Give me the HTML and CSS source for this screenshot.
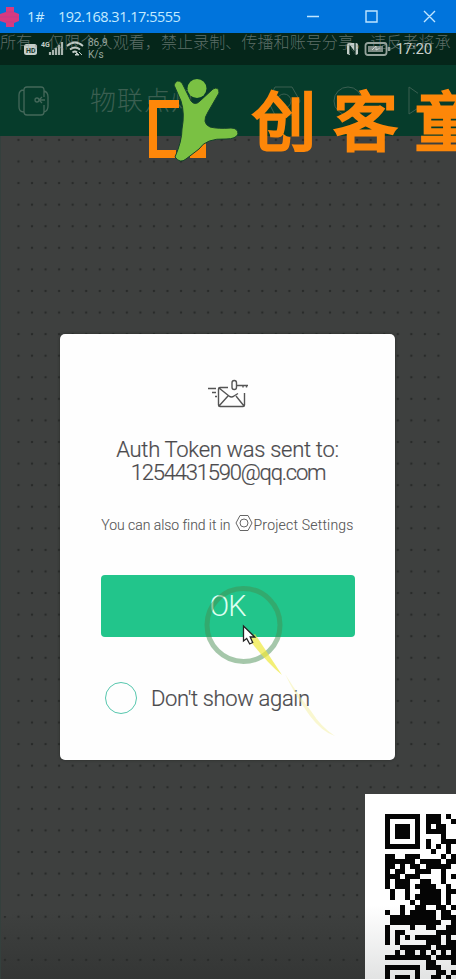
FILE: index.html
```html
<!DOCTYPE html>
<html lang="zh-CN">
<head>
<meta charset="utf-8">
<title>192.168.31.17:5555</title>
<link rel="stylesheet" href="styles.css">
</head>
<body>
<div class="window">
  <header class="titlebar">
    <svg class="app-icon" width="20" height="22" viewBox="0 0 20 22"><path d="M6 1h8v5l5 2v7l-5 2v4H6v-4l-6-2V8l6-2z" fill="#d83a80"/><path d="M0 11h19M6 6h8M6 16h8" stroke="#b13f92" opacity=".5"/></svg>
    <span class="device">1#</span>
    <span class="address">192.168.31.17:5555</span>
    <svg class="controls" width="132" height="17" viewBox="0 0 132 17" fill="none" stroke="#bfe5ff" stroke-width="1.4"><path d="M1 8.500h12M60 3h11v11H60zM118 3l11 11M129 3l-11 11"/></svg>
  </header>

  <div class="statusbar">
    <svg class="status-left" width="62" height="18" viewBox="0 0 62 18">
      <rect x="0" y="4" width="13" height="11" rx="2.5" fill="#c4cec9"/>
      <text x="2" y="12.500" class="hd">HD</text>
      <text x="17" y="7" class="gen">4G</text>
      <path d="M26 15v-3M29 15v-5M32 15V8M35 15V5M38 15V2" stroke="#a9b5af" stroke-width="2.200"/>
      <g fill="none" stroke="#c4cec9" stroke-width="1.800"><path d="M43 6q8-7 16 0M46 9.500q5-4 10 0M48.500 12.500q2.500-2 4.500 0"/></g>
      <path d="M51 15l2-2 2 2zM55 12l3 3" stroke="#c4cec9" fill="#c4cec9"/>
    </svg>
    <div class="speed"><span>86.9</span><span>K/s</span></div>
    <svg class="status-right" width="46" height="14" viewBox="0 0 46 14" fill="none">
      <path d="M1 12V3q0-2 2-2h7q2 0 2 2v9l-2 1-6-8v8z" fill="#c4cec9"/><path d="M4 12V4l5 7V1" stroke="#05261a" stroke-width="1.200"/>
      <rect x="19.500" y="1" width="21" height="12" rx="2.500" stroke="#96a49d" stroke-width="1.800"/><rect x="22" y="4" width="15" height="6" fill="#7d8b84"/><path d="M43 5v4" stroke="#96a49d" stroke-width="2.500"/><path d="M26 8l4-4v4l4-2" stroke="#d0d8d4"/>
    </svg>
    <time class="clock">17:20</time>
    <div class="watermark">所有，仅限个人观看，禁止录制、传播和账号分享，违反者将承</div>
  </div>

  <div class="appbar">
    <svg class="exit-icon" width="32" height="32" viewBox="0 0 32 32" fill="none" stroke="#44685a" stroke-width="1.300"><path d="M26 12V5q0-3-3-3H9Q6 2 6 5v22q0 3 3 3h14q3 0 3-3v-7M6 5Q1 5 1 10v12q0 5 5 5M26 6q4 1 4 6v9q0 5-4 6M27 15h-6M21 15l3-3M21 15l3 3"/><circle cx="19" cy="15" r="2"/></svg>
    <span class="project">物联点灯</span>
    <svg class="bar-actions" width="150" height="34" viewBox="0 0 150 34" fill="none" stroke="#3b5f51"><path d="M7 3h17l8 14-8 14H7L0 17z"/><circle cx="16" cy="17" r="7"/><circle cx="80" cy="17" r="14"/><path d="M141 3v27l20-13z"/></svg>
    <div class="brand">
      <svg width="91" height="84" viewBox="0 0 91 84">
        <path d="M31 25H5v50h23M42 75h12V56" fill="none" stroke="#fd8709" stroke-width="8"/>
        <path d="M26 6Q29-1 34 4l9 18q4 5 9 0l13-12q6-3 6 4L60 33q-7 11 2 15 8 2 21 1 7 0 7 6-2 5-12 5-20-1-27 10L38 80q-6 5-11-2 7-16 7-28Q37 34 33 22z" fill="#7ac143" stroke="#14402c"/>
        <circle cx="49" cy="9.500" r="9.500" fill="#7ac143"/>
      </svg>
      <span class="brand-name">创客童</span>
    </div>
  </div>

  <main class="canvas">
    <section class="dialog">
      <svg class="mail-icon" width="42" height="30" viewBox="0 0 42 30" fill="none" stroke="#555" stroke-width="1.400"><path d="M0 9.500h8M4 13.500h4M7 17.500h2M20 8.500h-8q-1.500 0-1.500 1.500v16q0 1.500 1.500 1.500h23q1.500 0 1.500-1.500V14M11 9l10 8q2.500 2 5 0l4-2.500M11 27l9-10M36 27l-8-10"/><rect x="24" y="1.500" width="4.500" height="9" rx="2.200"/><path d="M29 6.500h11M35 6v2.500M38.500 6v2.500"/></svg>
      <p class="headline"><span class="h-one">Auth Token was sent to:</span><span class="h-two">1254431590@qq.com</span></p>
      <p class="hint"><span class="hint-a">You can also find it in</span><svg width="18" height="18" viewBox="0 0 18 18" fill="none" stroke="#666"><path d="M5 1.500h8L17 9l-4 7.500H5L1 9z"/><circle cx="9" cy="9" r="4"/></svg><span class="hint-b">Project Settings</span></p>
      <button class="ok">OK</button>
      <label class="again"><span class="radio"></span><span class="again-text">Don't show again</span></label>
    </section>
  </main>

  <svg class="pointer" width="136" height="155" viewBox="0 0 136 155">
    <circle cx="43.500" cy="40" r="36.500" fill="none" stroke="#468c50" stroke-opacity=".48" stroke-width="5"/>
    <path d="M48 53l7-4 27 41q-16-13-34-37z" fill="#eee83a" opacity=".7"/>
    <path d="M85 89q14 22 26 37 10 16 24 25-13-4-25-20Q96 112 85 89z" fill="#f3ef9a" opacity=".45"/>
    <path d="M43.500 41v15l3.200-2.500 3 5.500 3-1.500-2.500-5.500h4.500z" fill="#fff" stroke="#222" stroke-width="1.300"/>
  </svg>

  <aside class="qr-card"><svg class="qr" width="76" height="166" viewBox="0 0 15 33" preserveAspectRatio="none" shape-rendering="crispEdges"><path id="modules" fill="#050505"/></svg></aside>
</div>
<script src="qr.js"></script>
</body>
</html>
```
FILE: styles.css
```css
* { box-sizing: border-box; }
body { margin: 0; background: #3e403f; font-family: Roboto, "Noto Sans CJK SC", sans-serif; }
.window { position: relative; width: 456px; height: 979px; overflow: hidden; display: flex; flex-direction: column; }
.titlebar { height: 33px; flex: none; display: flex; align-items: center; background: #0074dc; color: #c4ebff; font: 14.5px "Open Sans", sans-serif; }
.app-icon { flex: none; }
.device { width: 31px; margin-left: 7px; }
.address { letter-spacing: -.5px; white-space: nowrap; }
.controls { margin-left: auto; margin-right: 18px; }
.statusbar { position: relative; height: 32px; flex: none; display: flex; align-items: center; background: #05261a; color: #c9d1cd; padding: 0 24px; }
.hd { font: bold 7px Roboto, sans-serif; fill: #16372a; }
.gen { font: bold 7px Roboto, sans-serif; fill: #c4cec9; }
.speed { display: flex; flex-direction: column; margin-left: 2px; font-size: 10px; line-height: 12px; color: #98a69f; }
.status-right { margin-left: auto; }
.clock { font-size: 15px; letter-spacing: -.2px; margin-left: 4px; }
.watermark { position: absolute; left: 0; top: -3px; font: 300 16.1px/22px "Noto Sans CJK SC", sans-serif; color: rgba(150, 158, 154, .6); white-space: nowrap; }
.appbar { position: relative; height: 71px; flex: none; display: flex; align-items: center; padding-left: 18px; background: #063c2b; }
.project { margin-left: 40px; margin-top: -4px; font: 300 26px "Noto Sans CJK SC", sans-serif; color: #3b5f51; letter-spacing: 1px; }
.bar-actions { position: absolute; left: 268px; top: 19px; }
.brand { position: absolute; z-index: 2; left: 148px; top: 14px; display: flex; }
.brand svg { flex: none; }
.brand-name { margin-left: 13px; margin-top: -4px; font: 400 64px/84px "Noto Sans CJK SC", sans-serif; letter-spacing: 17.500px; color: #fd8709; -webkit-text-stroke: 3px #fd8709; stroke-linejoin: round; white-space: nowrap; }
.canvas { flex: 1; padding: 198px 61px 0 59px; background: linear-gradient(90deg, #3e403f 11px, transparent 11px 440px, #3e403f 440px) 0 0 / 100% 780px no-repeat, radial-gradient(circle, #292b2a 1px, transparent 1.600px) 10.700px 14.700px / 13.560px 21.580px, linear-gradient(#3e403f 92%, #343635); border-left: 1px solid #34403d; }
.dialog { height: 426px; background: #fefefe; border-radius: 5px; display: flex; flex-direction: column; align-items: center; box-shadow: 0 0 3px #292b2a; color: #4b4a4d; }
.mail-icon { margin-top: 45px; margin-left: 2px; }
.headline { margin: 29px 0 0; display: flex; flex-direction: column; align-items: center; font-size: 22px; line-height: 23px; font-weight: 300; white-space: nowrap; -webkit-text-stroke: .2px; }
.h-one { letter-spacing: -.3px; }
.h-two { letter-spacing: -1.200px; margin-left: 1px; }
.hint { margin: 31px 0 0; height: 20px; display: flex; align-items: center; font-size: 14px; font-weight: 300; color: #555; white-space: nowrap; -webkit-text-stroke: .1px; }
.hint-a { letter-spacing: -.05px; }
.hint-b { letter-spacing: .2px; }
.hint svg { margin: -4px 1px 0 4px; }
.ok { margin: 40px 0 0; width: 254px; height: 62px; border: 0; border-radius: 4px; background: #22c58b; color: #dcfff0; font: 300 29px Roboto, sans-serif; letter-spacing: -1px; }
.again { align-self: stretch; margin: 45px 0 0 45px; display: flex; align-items: center; font-size: 22px; font-weight: 300; -webkit-text-stroke: .2px; }
.radio { width: 32px; height: 32px; border: 1.500px solid #57c7ae; border-radius: 50%; }
.again-text { margin-left: 14px; letter-spacing: -.35px; white-space: nowrap; }
.pointer { position: absolute; left: 200px; top: 585px; }
.qr-card { position: absolute; left: 365px; top: 794px; width: 91px; height: 185px; padding: 20px 0 0 20px; background: linear-gradient(#fff 60%, #e2e3e3); }
.qr { display: block; }
```
FILE: qr.js
```js
const rows = `111111101110101
100000101110010
101110101011001
101110101111001
101110100001000
100000101001111
111111101010101
000000000100100
110011100001010
111111011110110
110101101111101
101100111001000
111011100001010
101110011001000
101110111100100
010010011110110
010010111110101
000001011110101
000100110011011
100101111101100
011111111101110
011111111110011
100001001100110
101100000011110
101010111110101
101000001110110
000111111011111
001011010101011
111111111011111
000000001100011
111111101110001
100000100011011
101110100110101`.split("\n");
let d = "";
rows.forEach((row, y) => [...row].forEach((cell, x) => {
  if (cell === "1") d += `M${x} ${y}h1v1h-1z`;
}));
document.getElementById("modules").setAttribute("d", d);
```
